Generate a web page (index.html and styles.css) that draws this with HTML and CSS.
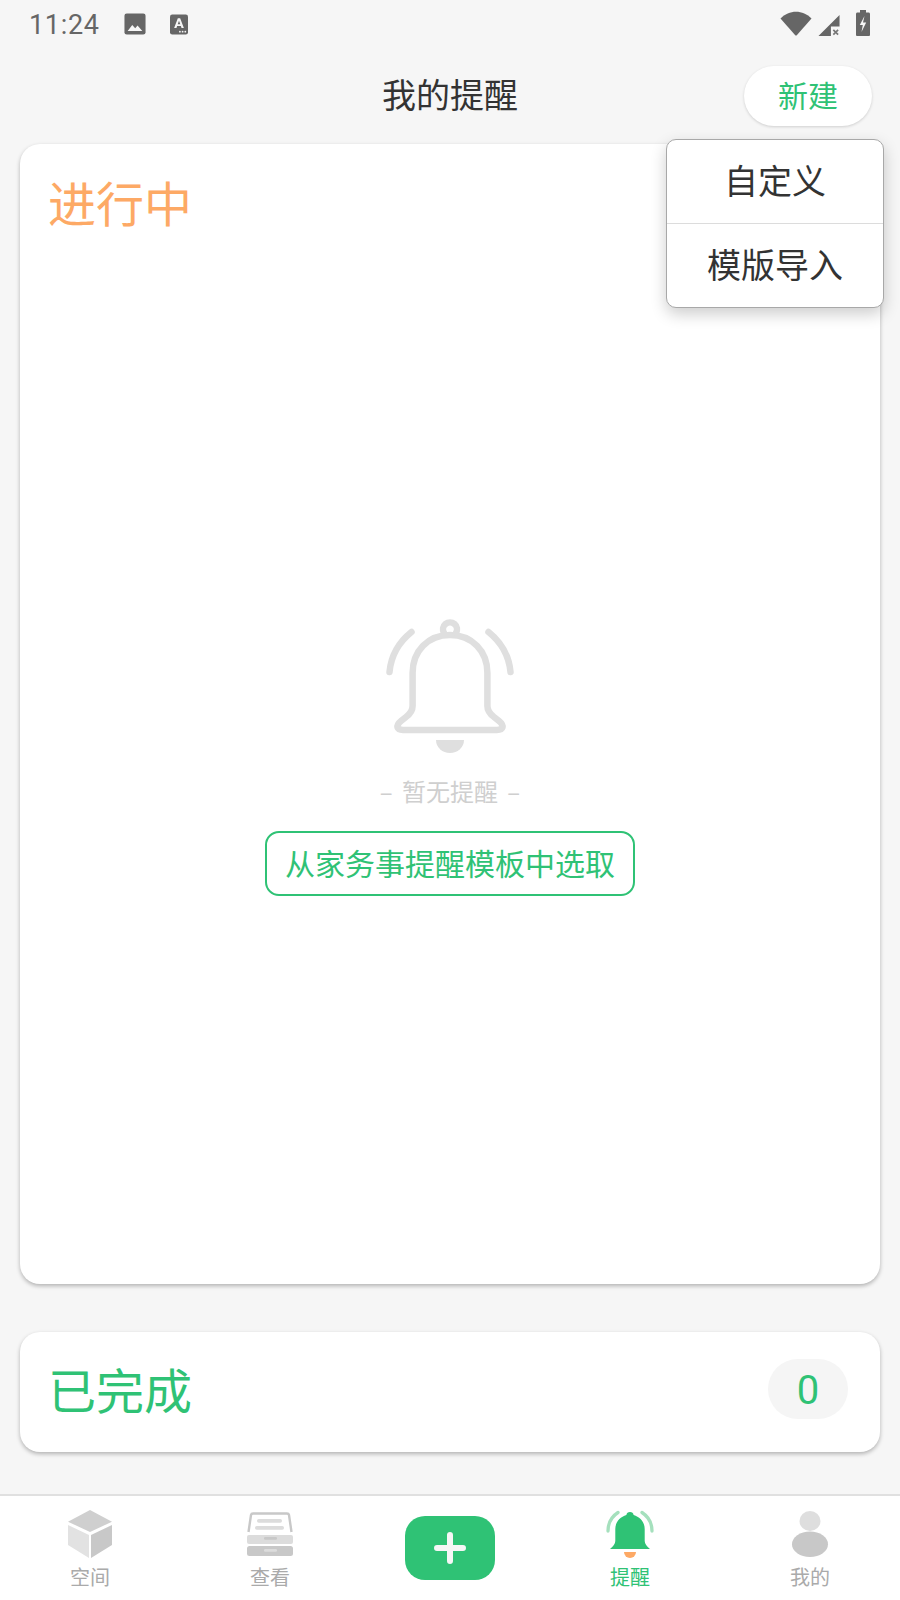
FILE: index.html
```html
<!DOCTYPE html>
<html lang="zh">
<head>
<meta charset="utf-8">
<title>我的提醒</title>
<link rel="stylesheet" href="styles.css">
</head>
<body>
<div class="page">
  <div class="status">
    <span class="time">11:24</span>
    <svg class="st-pic" viewBox="0 0 24 24"><rect x="0.5" y="0.5" width="23" height="23" rx="2.5" fill="#666"/><path d="M4 19.5 9 13l3.2 3.6 2.6-3.1 5.2 6z" fill="#f6f6f6"/></svg>
    <svg class="st-a" viewBox="0 0 20 22"><rect width="20" height="22" rx="2.5" fill="#666"/><path d="M4.6 15 8.700 4h2.600l4.100 11h-2.600l-.7-2.200H7.900L7.200 15zM8.600 10.800h2.800L10 6.800z" fill="#f6f6f6"/><circle cx="11" cy="19" r="1" fill="#f6f6f6"/><circle cx="14" cy="19" r="1" fill="#f6f6f6"/><circle cx="17" cy="19" r="1" fill="#f6f6f6"/></svg>
    <span class="status-gap"></span>
    <svg class="st-wifi" viewBox="0 0 32 25"><path d="M0.5 7.500C9-1.500 23-1.500 31.500 7.500L17 24a1.400 1.400 0 0 1-2 0z" fill="#666"/></svg>
    <svg class="st-sig" viewBox="0 0 24 24"><path d="M23 1v12h-9v10H1z" fill="#666"/><path d="M16.500 16.500l5 5m0-5-5 5" stroke="#777" stroke-width="1.800"/></svg>
    <svg class="st-bat" viewBox="0 0 16 26"><path d="M5 0h6v2.500h3a2 2 0 0 1 1 1.500v21a1 1 0 0 1-1 1H2a1 1 0 0 1-1-1V4a2 2 0 0 1 1-1.500h3z" fill="#666"/><path d="M9.500 6 4.800 15h3l-1.300 7 4.700-9.500H8z" fill="#f6f6f6"/></svg>
  </div>
  <header class="header">
    <h1 class="title">我的提醒</h1>
    <button class="new-btn">新建</button>
    <div class="menu">
      <div class="menu-item">自定义</div>
      <div class="menu-item">模版导入</div>
    </div>
  </header>
  <main class="main">
    <section class="card active">
      <h2 class="active-title">进行中</h2>
      <div class="empty">
        <svg class="empty-bell" viewBox="0 0 130 136" fill="none" stroke="#dfdfdf" stroke-linecap="round" stroke-width="6.500">
          <path d="M4.500 54C6 38 14 24 26.500 14"/>
          <path d="M125.500 54C124 38 116 24 103.500 14"/>
          <path d="M65 17C43 17 27.600 33 27.600 55V88C27.600 93 25 96 21 99L16 103C10 108 12 112 18 112H112C118 112 120 108 114 103L109 99C105 96 102.400 93 102.400 88V55C102.400 33 87 17 65 17z"/>
          <path d="M59 15A7 7 0 1 1 71 15"/>
          <path d="M51 122H79A14 13 0 0 1 51 122z" fill="#dfdfdf" stroke="none"/>
        </svg>
        <p class="empty-text">– 暂无提醒 –</p>
        <button class="template-btn">从家务事提醒模板中选取</button>
      </div>
    </section>
    <section class="card done">
      <h2 class="done-title">已完成</h2>
      <span class="count">0</span>
    </section>
  </main>
  <nav class="nav">
    <a class="nav-item">
      <svg class="nav-icon" viewBox="0 0 48 50"><path d="M24 0 46 11.700 24 22 2 11.700z" fill="#cfcfcf"/><path d="M2 15 23 25V48L2 35z" fill="#e2e2e2"/><path d="M46 15 25 25V48L46 35z" fill="#c8c8c8"/></svg>
      <span>空间</span>
    </a>
    <a class="nav-item">
      <svg class="nav-icon" viewBox="0 0 48 50"><path d="M2.500 22 5 5Q5.300 3.500 7 3.500h34q1.700 0 2 1.500L45.500 22" fill="none" stroke="#c8c8c8" stroke-width="2.400"/><rect x="11" y="9" width="25" height="3.700" rx="1.800" fill="#dcdcdc"/><rect x="9" y="16" width="29" height="3.700" rx="1.800" fill="#dcdcdc"/><rect x="1" y="25" width="46" height="9" rx="2" fill="#dcdcdc"/><rect x="18" y="27" width="13" height="2.700" rx="1.300" fill="#c8c8c8"/><rect x="1" y="36" width="46" height="10" rx="2.500" fill="#c8c8c8"/><rect x="18" y="39" width="13" height="2.700" rx="1.300" fill="#dcdcdc"/></svg>
      <span>查看</span>
    </a>
    <div class="nav-item">
      <button class="add-btn"><svg class="add-icon" viewBox="0 0 32 32"><path d="M16 3v26M3 16h26" stroke="#f6f6f6" stroke-width="6" stroke-linecap="round"/></svg></button>
    </div>
    <a class="nav-item current">
      <svg class="nav-icon" viewBox="0 0 48 50"><path d="M2 21C2 13 5 7 12 2.500" fill="none" stroke="#a5e0bd" stroke-width="3.300" stroke-linecap="round"/><path d="M46 21C46 13 43 7 36 2.500" fill="none" stroke="#a5e0bd" stroke-width="3.300" stroke-linecap="round"/><path d="M24 2c2 0 3.400 1.200 3.600 3C34 7 38.700 12 38.700 19v12c0 3 2 5 5.300 8H4c3.300-3 5.300-5 5.300-8V19C9.300 12 14 7 20.400 5 20.600 3.200 22 2 24 2z" fill="#2fc275"/><path d="M18 42h12a6 6 0 0 1-12 0z" fill="#fda965"/></svg>
      <span>提醒</span>
    </a>
    <a class="nav-item">
      <svg class="nav-icon" viewBox="0 0 48 50"><ellipse cx="24" cy="11" rx="10.500" ry="10" fill="#dedede"/><ellipse cx="24" cy="34.300" rx="18" ry="12.700" fill="#c8c8c8"/></svg>
      <span>我的</span>
    </a>
  </nav>
</div>
</body>
</html>
```

FILE: styles.css
```css
* { box-sizing: border-box; }
html, body { margin: 0; padding: 0; }
body {
  width: 900px;
  height: 1600px;
  background: #f6f6f6;
  font-family: "Noto Sans CJK SC", "Noto Sans", sans-serif;
  overflow: hidden;
}
.page { height: 1600px; display: flex; flex-direction: column; }
button { font-family: inherit; cursor: pointer; }

.status {
  height: 50px;
  display: flex;
  align-items: center;
  padding: 0 29px 4px 29px;
  flex: none;
}
.time { font-family: Roboto, sans-serif; font-size: 27px; color: #666; letter-spacing: 0.7px; width: 95px; margin-top: 4px; }
.st-pic { width: 22px; height: 22px; margin-right: 24px; margin-top: 2px; }
.st-a { width: 18px; height: 21px; margin-top: 2px; }
.status-gap { flex: 1; }
.st-wifi { width: 32px; height: 25px; margin-right: 5px; }
.st-sig { width: 24px; height: 23px; margin-right: 14px; margin-top: 4px; }
.st-bat { width: 16px; height: 26px; }

.header {
  position: relative;
  height: 94px;
  flex: none;
  display: flex;
  align-items: flex-start;
  justify-content: center;
}
.title { margin: 19px 0 0; font-size: 34px; line-height: 50px; font-weight: 400; color: #333; }
.new-btn {
  position: absolute;
  left: 744px;
  top: 16px;
  width: 128px;
  height: 60px;
  border: 0;
  border-radius: 30px;
  background: #fff;
  color: #2fc275;
  font-size: 30px;
  padding: 0 0 4px;
  box-shadow: 0 1px 3px rgba(0,0,0,.16);
}
.menu {
  position: absolute;
  left: 666px;
  top: 89px;
  width: 218px;
  height: 169px;
  z-index: 2;
  background: #fff;
  border: 1px solid #a8a8a8;
  border-radius: 10px;
  box-shadow: 0 6px 16px rgba(0,0,0,.2);
  display: flex;
  flex-direction: column;
}
.menu-item {
  flex: 1;
  display: flex;
  align-items: center;
  justify-content: center;
  font-size: 34px;
  color: #333;
  padding-bottom: 4px;
}
.menu-item + .menu-item { border-top: 1px solid #dcdcdc; }

.main {
  flex: 1;
  display: flex;
  flex-direction: column;
  gap: 48px;
  padding: 0 20px;
}
.card {
  background: #fff;
  border-radius: 20px;
  box-shadow: 0 2px 4px rgba(0,0,0,.28);
}
.active { height: 1140px; padding: 25px 28px; display: flex; flex-direction: column; }
.active-title { margin: 0; font-size: 48px; line-height: 64px; font-weight: 400; color: #fda965; }
.empty {
  display: flex;
  flex-direction: column;
  align-items: center;
  margin-top: 385px;
}
.empty-bell { width: 130px; height: 136px; display: block; }
.empty-text { margin: 19px 0 0; font-size: 24px; line-height: 36px; color: #cfcfcf; word-spacing: 4px; }
.template-btn {
  margin-top: 22px;
  width: 370px;
  height: 65px;
  background: #fff;
  border: 2px solid #2fc275;
  border-radius: 14px;
  color: #2fc275;
  font-size: 30px;
  padding: 0 0 3px;
}
.done {
  height: 120px;
  display: flex;
  align-items: center;
  justify-content: space-between;
  padding: 0 32px 6px 28px;
}
.done-title { margin: 0 0 2px; font-size: 48px; font-weight: 400; color: #2fc275; }
.count {
  width: 80px;
  height: 60px;
  border-radius: 30px;
  background: #f5f5f5;
  color: #2fc275;
  font-family: Roboto, sans-serif;
  font-size: 40px;
  padding-top: 3px;
  display: flex;
  align-items: center;
  justify-content: center;
}

.nav {
  height: 106px;
  flex: none;
  background: #fff;
  border-top: 2px solid #e0e0e0;
  display: grid;
  grid-template-columns: repeat(5, 180px);
}
.nav-item {
  display: flex;
  flex-direction: column;
  align-items: center;
  color: #aaa;
  font-size: 20px;
  line-height: 28px;
  padding-top: 14px;
}
.nav-icon { width: 48px; height: 50px; display: block; margin-bottom: 3px; }
.current { color: #2fc275; }
.add-btn {
  width: 90px;
  height: 64px;
  margin-top: 6px;
  border: 0;
  border-radius: 20px;
  background: #2fc275;
  padding: 0;
  display: flex;
  align-items: center;
  justify-content: center;
}
.add-icon { width: 32px; height: 32px; }
```
